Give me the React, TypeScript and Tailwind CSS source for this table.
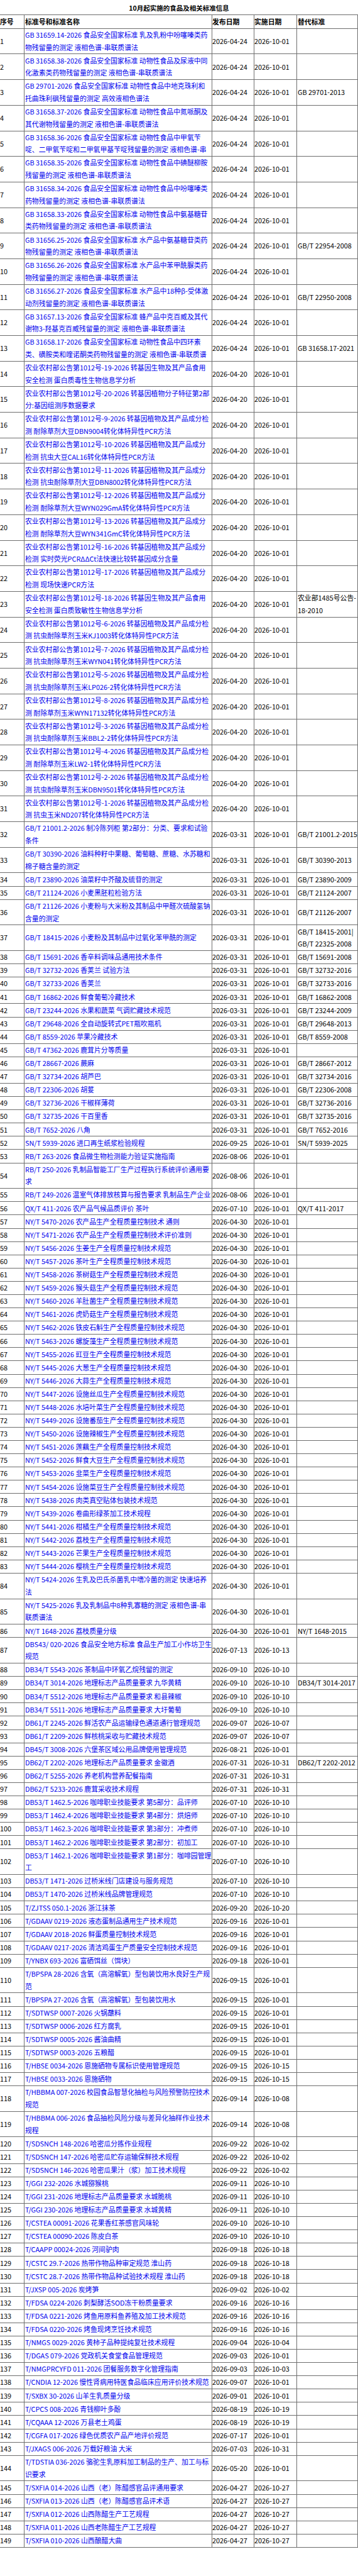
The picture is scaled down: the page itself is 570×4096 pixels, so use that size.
type Row = [number, string, string, string, string];

// 两行高的行（其余为单行）
const twoLine = new Set<number>([
  ...Array.from({ length: 33 }, (_, i) => i + 1),
  36, 37, 54, 84, 85, 87, 102, 110, 118, 119, 144,
]);

const NT = "农业农村部公告第1012号";

// 第5、13行在原表中只显示到两行为止
const rows: Row[] = [
  [1, "GB 31659.14-2026 食品安全国家标准 乳及乳粉中吩噻嗪类药物残留量的测定 液相色谱-串联质谱法", "2026-04-24", "2026-10-01", ""],
  [2, "GB 31658.38-2026 食品安全国家标准 动物性食品及尿液中同化激素类药物残留量的测定 液相色谱-串联质谱法", "2026-04-24", "2026-10-01", ""],
  [3, "GB 29701-2026 食品安全国家标准 动物性食品中地克珠利和托曲珠利砜残留量的测定 高效液相色谱法", "2026-04-24", "2026-10-01", "GB 29701-2013"],
  [4, "GB 31658.37-2026 食品安全国家标准 动物性食品中氮哌酮及其代谢物残留量的测定 液相色谱-串联质谱法", "2026-04-24", "2026-10-01", ""],
  [5, "GB 31658.36-2026 食品安全国家标准 动物性食品中甲氧苄啶、二甲氧苄啶和二甲氧甲基苄啶残留量的测定 液相色谱-串", "2026-04-24", "2026-10-01", ""],
  [6, "GB 31658.35-2026 食品安全国家标准 动物性食品中碘醚柳胺残留量的测定 液相色谱-串联质谱法", "2026-04-24", "2026-10-01", ""],
  [7, "GB 31658.34-2026 食品安全国家标准 动物性食品中吩噻嗪类药物残留量的测定 液相色谱-串联质谱法", "2026-04-24", "2026-10-01", ""],
  [8, "GB 31658.33-2026 食品安全国家标准 动物性食品中氨基糖苷类药物残留量的测定 液相色谱-串联质谱法", "2026-04-24", "2026-10-01", ""],
  [9, "GB 31656.25-2026 食品安全国家标准 水产品中氨基糖苷类药物残留量的测定 液相色谱-串联质谱法", "2026-04-24", "2026-10-01", "GB/T 22954-2008"],
  [10, "GB 31656.26-2026 食品安全国家标准 水产品中苯甲酰脲类药物残留量的测定 液相色谱-串联质谱法", "2026-04-24", "2026-10-01", ""],
  [11, "GB 31656.27-2026 食品安全国家标准 水产品中18种β-受体激动剂残留量的测定 液相色谱-串联质谱法", "2026-04-24", "2026-10-01", "GB/T 22950-2008"],
  [12, "GB 31657.13-2026 食品安全国家标准 蜂产品中克百威及其代谢物3-羟基克百威残留量的测定 液相色谱-串联质谱法", "2026-04-24", "2026-10-01", ""],
  [13, "GB 31658.17-2026 食品安全国家标准 动物性食品中四环素类、磺胺类和喹诺酮类药物残留量的测定 液相色谱-串联质谱", "2026-04-24", "2026-10-01", "GB 31658.17-2021"],
  [14, `${NT}-19-2026 转基因生物及其产品食用安全检测 蛋白质毒性生物信息学分析`, "2026-04-20", "2026-10-01", ""],
  [15, `${NT}-20-2026 转基因植物分子特征第2部分:基因组测序数据要求`, "2026-04-20", "2026-10-01", ""],
  [16, `${NT}-9-2026 转基因植物及其产品成分检测 耐除草剂大豆DBN9004转化体特异性PCR方法`, "2026-04-20", "2026-10-01", ""],
  [17, `${NT}-10-2026 转基因植物及其产品成分检测 抗虫大豆CAL16转化体特异性PCR方法`, "2026-04-20", "2026-10-01", ""],
  [18, `${NT}-11-2026 转基因植物及其产品成分检测 抗虫耐除草剂大豆DBN8002转化体特异性PCR方法`, "2026-04-20", "2026-10-01", ""],
  [19, `${NT}-12-2026 转基因植物及其产品成分检测 耐除草剂大豆WYN029GmA转化体特异性PCR方法`, "2026-04-20", "2026-10-01", ""],
  [20, `${NT}-13-2026 转基因植物及其产品成分检测 耐除草剂大豆WYN341GmC转化体特异性PCR方法`, "2026-04-20", "2026-10-01", ""],
  [21, `${NT}-16-2026 转基因植物及其产品成分检测 实时荧光PCRΔΔCt法快速比较转基因成分含量`, "2026-04-20", "2026-10-01", ""],
  [22, `${NT}-17-2026 转基因植物及其产品成分检测 现场快速PCR方法`, "2026-04-20", "2026-10-01", ""],
  [23, `${NT}-18-2026 转基因生物及其产品食用安全检测 蛋白质致敏性生物信息学分析`, "2026-04-20", "2026-10-01", "农业部1485号公告-18-2010"],
  [24, `${NT}-6-2026 转基因植物及其产品成分检测 抗虫耐除草剂玉米KJ1003转化体特异性PCR方法`, "2026-04-20", "2026-10-01", ""],
  [25, `${NT}-7-2026 转基因植物及其产品成分检测 抗虫耐除草剂玉米WYN041转化体特异性PCR方法`, "2026-04-20", "2026-10-01", ""],
  [26, `${NT}-5-2026 转基因植物及其产品成分检测 抗虫耐除草剂玉米LP026-2转化体特异性PCR方法`, "2026-04-20", "2026-10-01", ""],
  [27, `${NT}-8-2026 转基因植物及其产品成分检测 耐除草剂玉米WYN17132转化体特异性PCR方法`, "2026-04-20", "2026-10-01", ""],
  [28, `${NT}-3-2026 转基因植物及其产品成分检测 抗虫耐除草剂玉米BBL2-2转化体特异性PCR方法`, "2026-04-20", "2026-10-01", ""],
  [29, `${NT}-4-2026 转基因植物及其产品成分检测 耐除草剂玉米LW2-1转化体特异性PCR方法`, "2026-04-20", "2026-10-01", ""],
  [30, `${NT}-2-2026 转基因植物及其产品成分检测 抗虫耐除草剂玉米DBN9501转化体特异性PCR方法`, "2026-04-20", "2026-10-01", ""],
  [31, `${NT}-1-2026 转基因植物及其产品成分检测 抗虫玉米ND207转化体特异性PCR方法`, "2026-04-20", "2026-10-01", ""],
  [32, "GB/T 21001.2-2026 制冷陈列柜 第2部分：分类、要求和试验条件", "2026-03-31", "2026-10-01", "GB/T 21001.2-2015"],
  [33, "GB/T 30390-2026 油料种籽中果糖、葡萄糖、蔗糖、水苏糖和棉子糖含量的测定", "2026-03-31", "2026-10-01", "GB/T 30390-2013"],
  [34, "GB/T 23890-2026 油菜籽中芥酸及硫苷的测定", "2026-03-31", "2026-10-01", "GB/T 23890-2009"],
  [35, "GB/T 21124-2026 小麦黑胚粒检验方法", "2026-03-31", "2026-10-01", "GB/T 21124-2007"],
  [36, "GB/T 21126-2026 小麦粉与大米粉及其制品中甲醛次硫酸氢钠含量的测定", "2026-03-31", "2026-10-01", "GB/T 21126-2007"],
  [37, "GB/T 18415-2026 小麦粉及其制品中过氧化苯甲酰的测定", "2026-03-31", "2026-10-01", "GB/T 18415-2001|\nGB/T 22325-2008"],
  [38, "GB/T 15691-2026 香辛料调味品通用技术条件", "2026-03-31", "2026-10-01", "GB/T 15691-2008"],
  [39, "GB/T 32732-2026 香荚兰 试验方法", "2026-03-31", "2026-10-01", "GB/T 32732-2016"],
  [40, "GB/T 32733-2026 香荚兰", "2026-03-31", "2026-10-01", "GB/T 32733-2016"],
  [41, "GB/T 16862-2026 鲜食葡萄冷藏技术", "2026-03-31", "2026-10-01", "GB/T 16862-2008"],
  [42, "GB/T 23244-2026 水果和蔬菜 气调贮藏技术规范", "2026-03-31", "2026-10-01", "GB/T 23244-2009"],
  [43, "GB/T 29648-2026 全自动旋转式PET瓶吹瓶机", "2026-03-31", "2026-10-01", "GB/T 29648-2013"],
  [44, "GB/T 8559-2026 苹果冷藏技术", "2026-03-31", "2026-10-01", "GB/T 8559-2008"],
  [45, "GB/T 47362-2026 鹿茸片分等质量", "2026-03-31", "2026-10-01", ""],
  [46, "GB/T 28667-2026 蕨麻", "2026-03-31", "2026-10-01", "GB/T 28667-2012"],
  [47, "GB/T 32734-2026 胡芦巴", "2026-03-31", "2026-10-01", "GB/T 32734-2016"],
  [48, "GB/T 22306-2026 胡荽", "2026-03-31", "2026-10-01", "GB/T 22306-2008"],
  [49, "GB/T 32736-2026 干椒样薄荷", "2026-03-31", "2026-10-01", "GB/T 32736-2016"],
  [50, "GB/T 32735-2026 干百里香", "2026-03-31", "2026-10-01", "GB/T 32735-2016"],
  [51, "GB/T 7652-2026 八角", "2026-03-31", "2026-10-01", "GB/T 7652-2016"],
  [52, "SN/T 5939-2026 进口再生纸浆检验规程", "2026-09-25", "2026-10-01", "SN/T 5939-2025"],
  [53, "RB/T 263-2026 食品微生物检测能力验证实施指南", "2026-08-06", "2026-10-01", ""],
  [54, "RB/T 250-2026 乳制品智能工厂生产过程执行系统评价通用要求", "2026-08-06", "2026-10-01", ""],
  [55, "RB/T 249-2026 温室气体排放核算与报告要求 乳制品生产企业", "2026-08-06", "2026-10-01", ""],
  [56, "QX/T 411-2026 农产品气候品质评价 茶叶", "2026-07-10", "2026-10-01", "QX/T 411-2017"],
  [57, "NY/T 5470-2026 农产品生产全程质量控制技术 通则", "2026-04-30", "2026-10-01", ""],
  [58, "NY/T 5471-2026 农产品生产全程质量控制技术评价准则", "2026-04-30", "2026-10-01", ""],
  [59, "NY/T 5456-2026 生姜生产全程质量控制技术规范", "2026-04-30", "2026-10-01", ""],
  [60, "NY/T 5457-2026 茶叶生产全程质量控制技术规范", "2026-04-30", "2026-10-01", ""],
  [61, "NY/T 5458-2026 茶树菇生产全程质量控制技术规范", "2026-04-30", "2026-10-01", ""],
  [62, "NY/T 5459-2026 猴头菇生产全程质量控制技术规范", "2026-04-30", "2026-10-01", ""],
  [63, "NY/T 5460-2026 羊肚菌生产全程质量控制技术规范", "2026-04-30", "2026-10-01", ""],
  [64, "NY/T 5461-2026 虎奶菇生产全程质量控制技术规范", "2026-04-30", "2026-10-01", ""],
  [65, "NY/T 5462-2026 铁皮石斛生产全程质量控制技术规范", "2026-04-30", "2026-10-01", ""],
  [66, "NY/T 5463-2026 螺旋藻生产全程质量控制技术规范", "2026-04-30", "2026-10-01", ""],
  [67, "NY/T 5455-2026 豇豆生产全程质量控制技术规范", "2026-04-30", "2026-10-01", ""],
  [68, "NY/T 5445-2026 大葱生产全程质量控制技术规范", "2026-04-30", "2026-10-01", ""],
  [69, "NY/T 5446-2026 大蒜生产全程质量控制技术规范", "2026-04-30", "2026-10-01", ""],
  [70, "NY/T 5447-2026 设施丝瓜生产全程质量控制技术规范", "2026-04-30", "2026-10-01", ""],
  [71, "NY/T 5448-2026 水培叶菜生产全程质量控制技术规范", "2026-04-30", "2026-10-01", ""],
  [72, "NY/T 5449-2026 设施番茄生产全程质量控制技术规范", "2026-04-30", "2026-10-01", ""],
  [73, "NY/T 5450-2026 设施辣椒生产全程质量控制技术规范", "2026-04-30", "2026-10-01", ""],
  [74, "NY/T 5451-2026 莲藕生产全程质量控制技术规范", "2026-04-30", "2026-10-01", ""],
  [75, "NY/T 5452-2026 鲜食大豆生产全程质量控制技术规范", "2026-04-30", "2026-10-01", ""],
  [76, "NY/T 5453-2026 韭菜生产全程质量控制技术规范", "2026-04-30", "2026-10-01", ""],
  [77, "NY/T 5454-2026 设施菜豆生产全程质量控制技术规范", "2026-04-30", "2026-10-01", ""],
  [78, "NY/T 5438-2026 肉类真空贴体包装技术规范", "2026-04-30", "2026-10-01", ""],
  [79, "NY/T 5439-2026 卷曲形绿茶加工技术规程", "2026-04-30", "2026-10-01", ""],
  [80, "NY/T 5441-2026 柑橘生产全程质量控制技术规范", "2026-04-30", "2026-10-01", ""],
  [81, "NY/T 5442-2026 荔枝生产全程质量控制技术规范", "2026-04-30", "2026-10-01", ""],
  [82, "NY/T 5443-2026 芒果生产全程质量控制技术规范", "2026-04-30", "2026-10-01", ""],
  [83, "NY/T 5444-2026 樱桃生产全程质量控制技术规范", "2026-04-30", "2026-10-01", ""],
  [84, "NY/T 5424-2026 生乳及巴氏杀菌乳中嗜冷菌的测定 快速培养法", "2026-04-30", "2026-10-01", ""],
  [85, "NY/T 5425-2026 乳及乳制品中8种乳寡糖的测定 液相色谱-串联质谱法", "2026-04-30", "2026-10-01", ""],
  [86, "NY/T 1648-2026 荔枝质量分级", "2026-04-30", "2026-10-01", "NY/T 1648-2015"],
  [87, "DBS43/ 020-2026 食品安全地方标准 食品生产加工小作坊卫生规范", "2026-07-13", "2026-10-13", ""],
  [88, "DB34/T 5543-2026 茶制品中环氧乙烷残留的测定", "2026-09-10", "2026-10-10", ""],
  [89, "DB34/T 3014-2026 地理标志产品质量要求 九华黄精", "2026-09-10", "2026-10-10", "DB34/T 3014-2017"],
  [90, "DB34/T 5512-2026 地理标志产品质量要求 和县辣椒", "2026-09-10", "2026-10-10", ""],
  [91, "DB34/T 5511-2026 地理标志产品质量要求 大圩葡萄", "2026-09-10", "2026-10-10", ""],
  [92, "DB61/T 2245-2026 鲜活农产品运输绿色通道通行管理规范", "2026-09-07", "2026-10-07", ""],
  [93, "DB61/T 2209-2026 鲜核桃采收与贮藏技术规范", "2026-09-07", "2026-10-07", ""],
  [94, "DB45/T 3008-2026 六堡茶区域公用品牌使用管理规范", "2026-08-21", "2026-10-01", ""],
  [95, "DB62/T 2202-2026 地理标志产品质量要求 金徽酒", "2026-07-31", "2026-10-31", "DB62/T 2202-2012"],
  [96, "DB62/T 5255-2026 养老机构营养配餐指南", "2026-07-31", "2026-10-31", ""],
  [97, "DB62/T 5233-2026 鹿茸采收技术规程", "2026-07-31", "2026-10-31", ""],
  [98, "DB53/T 1462.5-2026 咖啡职业技能要求 第5部分：品评师", "2026-07-10", "2026-10-10", ""],
  [99, "DB53/T 1462.4-2026 咖啡职业技能要求 第4部分：烘焙师", "2026-07-10", "2026-10-10", ""],
  [100, "DB53/T 1462.3-2026 咖啡职业技能要求 第3部分：冲煮师", "2026-07-10", "2026-10-10", ""],
  [101, "DB53/T 1462.2-2026 咖啡职业技能要求 第2部分：初加工", "2026-07-10", "2026-10-10", ""],
  [102, "DB53/T 1462.1-2026 咖啡职业技能要求 第1部分：咖啡园管理工", "2026-07-10", "2026-10-10", ""],
  [103, "DB53/T 1471-2026 过桥米线门店建设与服务规范", "2026-07-10", "2026-10-10", ""],
  [104, "DB53/T 1470-2026 过桥米线品牌管理规范", "2026-07-10", "2026-10-10", ""],
  [105, "T/ZJTSS 050.1-2026 浙江抹茶", "2026-09-20", "2026-10-20", ""],
  [106, "T/GDAAV 0219-2026 液态蛋制品通用生产技术规范", "2026-09-16", "2026-10-01", ""],
  [107, "T/GDAAV 2018-2026 鲜蛋质量控制技术规范", "2026-09-16", "2026-10-01", ""],
  [108, "T/GDAAV 0217-2026 清洁鸡蛋生产质量安全控制技术规范", "2026-09-16", "2026-10-01", ""],
  [109, "T/YNBX 693-2026 富硒饵丝（饵块）", "2026-09-18", "2026-10-01", ""],
  [110, "T/BPSPA 28-2026 含氧（高溶解氧）型包装饮用水良好生产规范", "2026-09-15", "2026-10-01", ""],
  [111, "T/BPSPA 27-2026 含氧（高溶解氧）型包装饮用水", "2026-09-15", "2026-10-01", ""],
  [112, "T/SDTWSP 0007-2026 火锅蘸料", "2026-09-15", "2026-10-01", ""],
  [113, "T/SDTWSP 0006-2026 红方腐乳", "2026-09-15", "2026-10-01", ""],
  [114, "T/SDTWSP 0005-2026 酱油曲精", "2026-09-15", "2026-10-01", ""],
  [115, "T/SDTWSP 0003-2026 五粮醋", "2026-09-15", "2026-10-01", ""],
  [116, "T/HBSE 0034-2026 恩施硒物专属标识使用管理规范", "2026-09-15", "2026-10-15", ""],
  [117, "T/HBSE 0033-2026 恩施硒物", "2026-09-15", "2026-10-15", ""],
  [118, "T/HBBMA 007-2026 校园食品智慧化抽检与风险预警防控技术规范", "2026-09-14", "2026-10-08", ""],
  [119, "T/HBBMA 006-2026 食品抽检风险分级与差异化抽样作业技术规程", "2026-09-14", "2026-10-08", ""],
  [120, "T/SDSNCH 148-2026 哈密瓜分拣作业规程", "2026-09-22", "2026-10-02", ""],
  [121, "T/SDSNCH 147-2026 哈密瓜贮存运输保鲜技术规程", "2026-09-22", "2026-10-02", ""],
  [122, "T/SDSNCH 146-2026 哈密瓜果汁（浆）加工技术规程", "2026-09-22", "2026-10-02", ""],
  [123, "T/GGI 232-2026 水城猕猴桃", "2026-09-11", "2026-10-10", ""],
  [124, "T/GGI 231-2026 地理标志产品质量要求 水城脆桃", "2026-09-11", "2026-10-10", ""],
  [125, "T/GGI 230-2026 地理标志产品质量要求 水城黄精", "2026-09-11", "2026-10-10", ""],
  [126, "T/CSTEA 00091-2026 花果香红茶感官风味轮", "2026-09-10", "2026-10-10", ""],
  [127, "T/CSTEA 00090-2026 陈皮白茶", "2026-09-10", "2026-10-10", ""],
  [128, "T/CAAPP 00024-2026 河间驴肉", "2026-09-18", "2026-10-18", ""],
  [129, "T/CSTC 29.7-2026 热带作物品种审定规范 淮山药", "2026-09-18", "2026-10-18", ""],
  [130, "T/CSTC 28.7-2026 热带作物品种试验技术规程 淮山药", "2026-09-18", "2026-10-18", ""],
  [131, "T/JXSP 005-2026 炭烤笋", "2026-09-02", "2026-10-02", ""],
  [132, "T/FDSA 0224-2026 刺梨酵活SOD冻干粉质量要求", "2026-09-16", "2026-10-16", ""],
  [133, "T/FDSA 0221-2026 烤鱼用原料鱼养殖及加工技术规范", "2026-09-16", "2026-10-16", ""],
  [134, "T/FDSA 0220-2026 烤鱼现烤烹饪技术规范", "2026-09-16", "2026-10-16", ""],
  [135, "T/NMGS 0029-2026 黄柿子品种提纯复壮技术规程", "2026-09-04", "2026-10-04", ""],
  [136, "T/DGAS 079-2026 党政机关食堂食品管理规范", "2026-09-03", "2026-10-01", ""],
  [137, "T/NMGPRCYFD 011-2026 团餐服务数字化管理指南", "2026-09-03", "2026-10-03", ""],
  [138, "T/CNDIA 12-2026 慢性肾病用特医食品临床应用评价技术规范", "2026-09-07", "2026-10-01", ""],
  [139, "T/SXBX 30-2026 山羊生乳质量分级", "2026-09-01", "2026-10-01", ""],
  [140, "T/CPCS 008-2026 青钱柳叶多酚", "2026-08-19", "2026-10-19", ""],
  [141, "T/CQAAA 12-2026 万县老土鸡蛋", "2026-08-19", "2026-10-19", ""],
  [142, "T/CGFA 017-2026 绿色优质农产品产地评价规范", "2026-07-17", "2026-10-01", ""],
  [143, "T/JXAGS 006-2026 万载好粮油 大米", "2026-07-03", "2026-10-31", ""],
  [144, "T/TDSTIA 036-2026 骆驼生乳原料加工制品的生产、加工与标识要求", "2026-05-20", "2026-10-01", ""],
  [145, "T/SXFIA 014-2026 山西（老）陈醋感官品评通用要求", "2026-04-27", "2026-10-27", ""],
  [146, "T/SXFIA 013-2026 山西（老）陈醋感官品评术语", "2026-04-27", "2026-10-27", ""],
  [147, "T/SXFIA 012-2026 山西陈醋生产工艺规程", "2026-04-27", "2026-10-27", ""],
  [148, "T/SXFIA 011-2026 山西老陈醋生产工艺规程", "2026-04-27", "2026-10-27", ""],
  [149, "T/SXFIA 010-2026 山西酿醋大曲", "2026-04-27", "2026-10-27", ""],
];

const cell = "flex items-center border-r border-[#6e6e6e] overflow-hidden";

function StandardRow({ row }: { row: Row }) {
  const [no, name, pub, impl, rep] = row;
  const two = twoLine.has(no);

  return (
    <div
      className={`grid grid-cols-[39px_299px_67px_68px_97px] border-b border-[#6e6e6e] ${
        two ? "h-[40.7px]" : "h-[21.1px]"
      }`}
    >
      <div className={cell}>{no}</div>
      <div className={`${cell} pl-px`}>
        {two ? (
          <div className="max-h-[39.2px] overflow-hidden text-[#0000ee]">{name}</div>
        ) : (
          <div className="whitespace-nowrap text-[#0000ee]">{name}</div>
        )}
      </div>
      <div className={cell}>{pub}</div>
      <div className={cell}>{impl}</div>
      <div className={`${cell} pl-px`}>
        <div className="max-h-[39.2px] overflow-hidden whitespace-pre-line break-all">{rep}</div>
      </div>
    </div>
  );
}

export default function App() {
  return (
    <div className="w-[570px] bg-white text-black font-['Noto_Sans_CJK_SC','Noto_Sans',sans-serif] text-[10.86px] leading-[19.6px]">
      <div className="flex h-[23.3px] items-center justify-center pt-[3px] text-[10.5px] font-bold">
        10月起实施的食品及相关标准信息
      </div>

      <div className="border-t border-[#6e6e6e]">
        {/* 表头 */}
        <div className="grid h-[21.5px] grid-cols-[39px_299px_67px_68px_97px] border-b border-[#6e6e6e] font-bold">
          <div className={cell}>序号</div>
          <div className={`${cell} pl-px`}>标准号和标准名称</div>
          <div className={cell}>发布日期</div>
          <div className={cell}>实施日期</div>
          <div className={`${cell} pl-px`}>替代标准</div>
        </div>

        {rows.map((r) => (
          <StandardRow key={r[0]} row={r} />
        ))}
      </div>
    </div>
  );
}
